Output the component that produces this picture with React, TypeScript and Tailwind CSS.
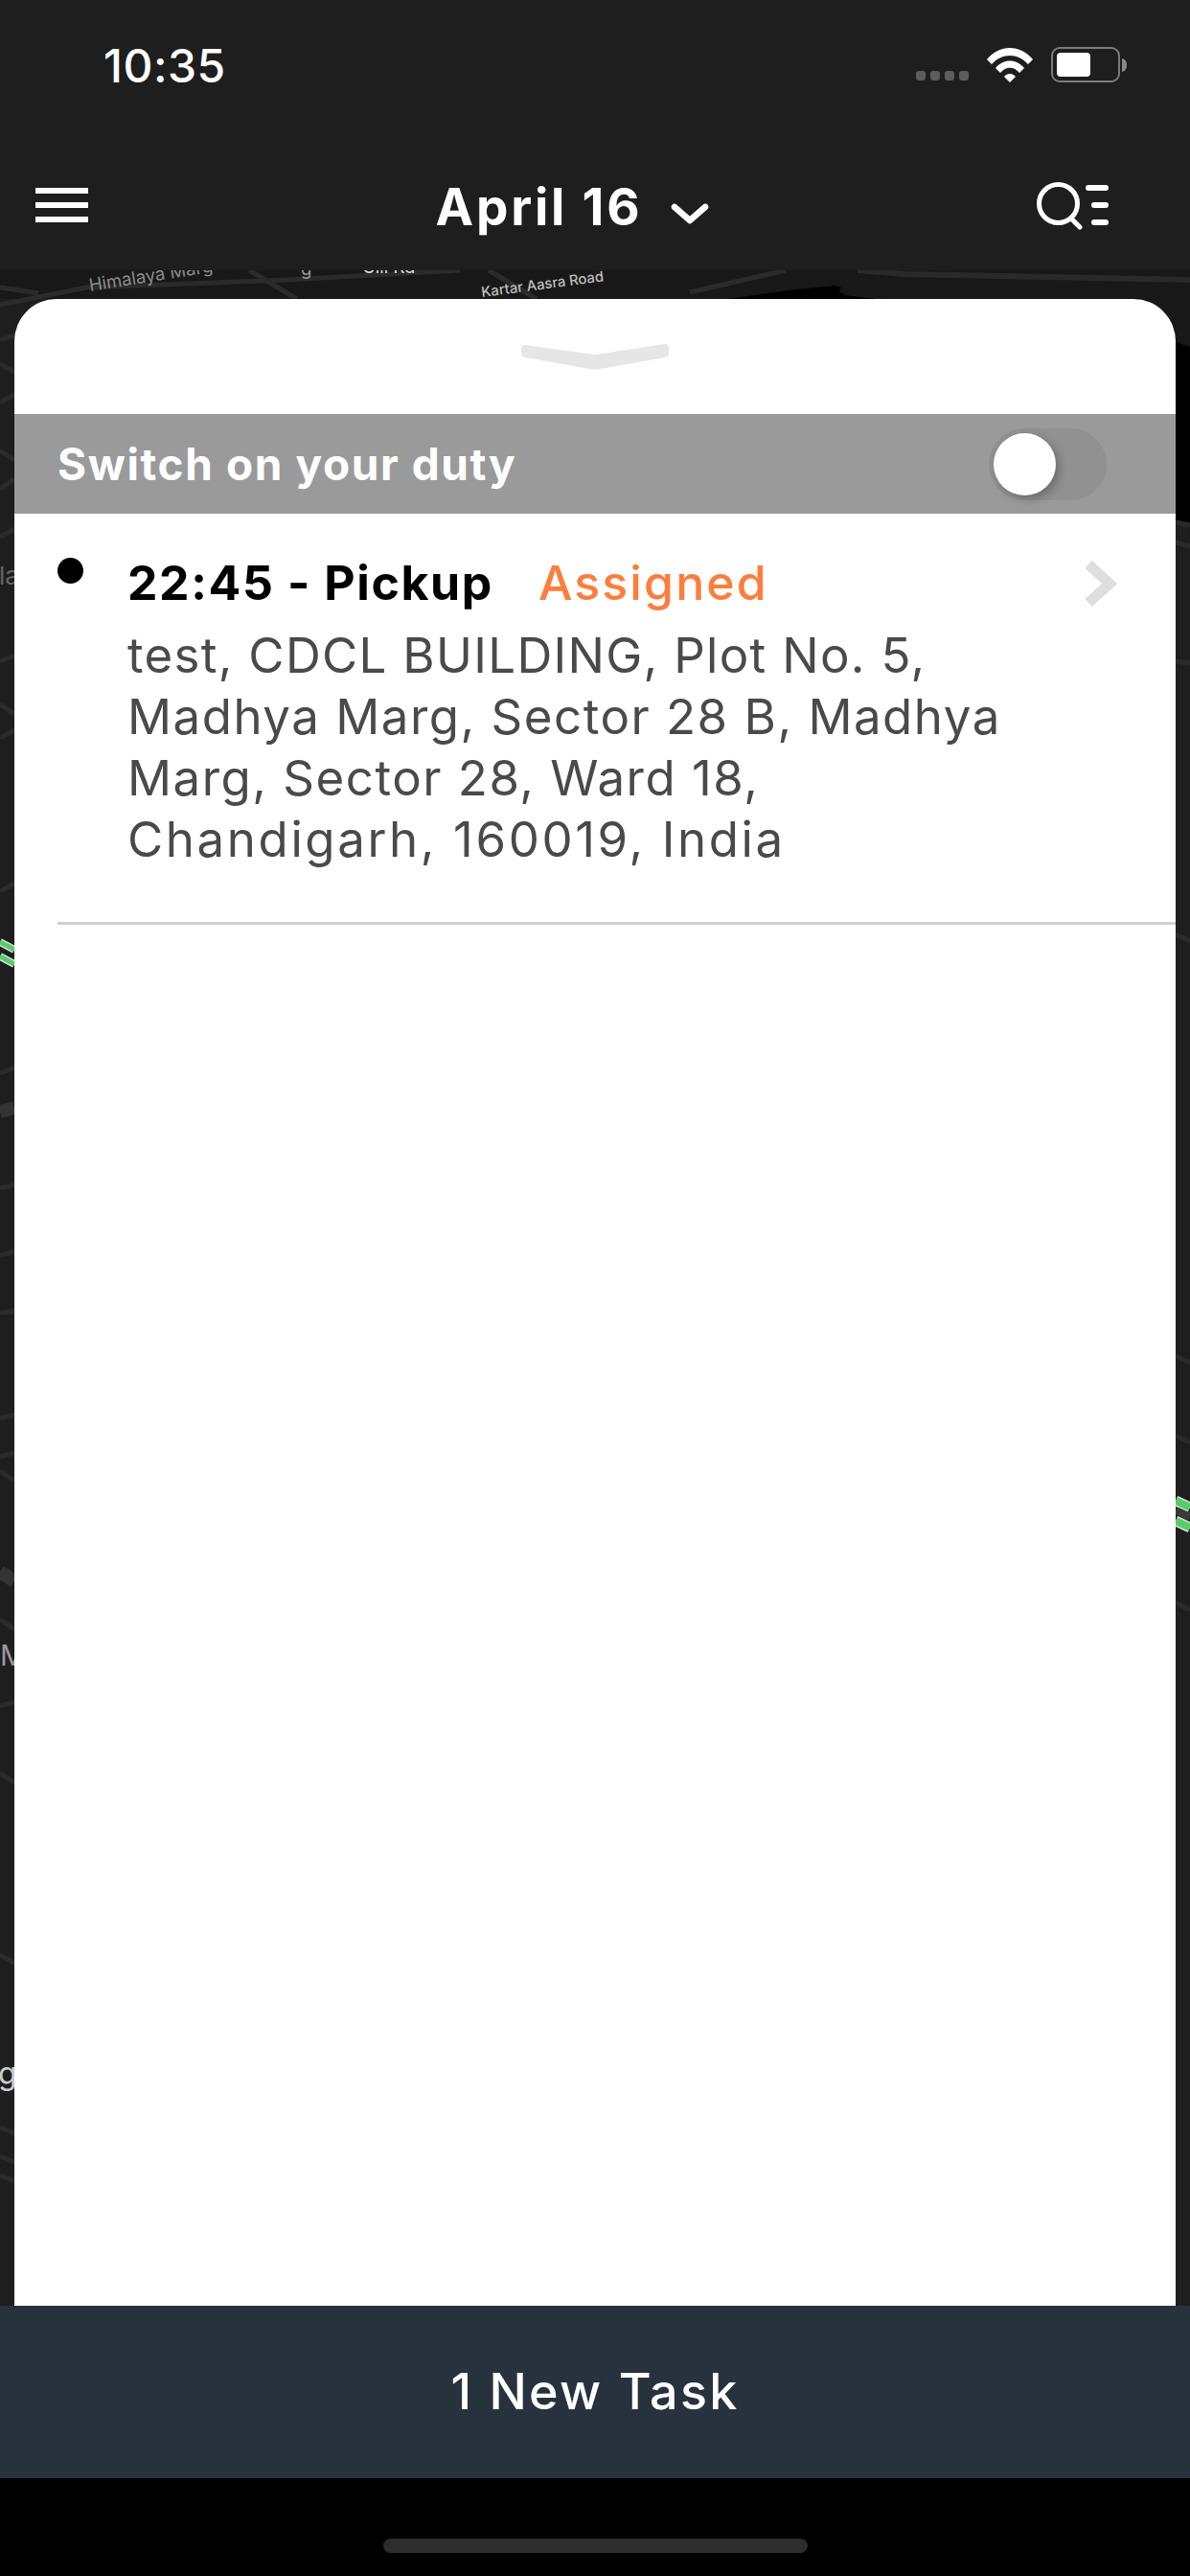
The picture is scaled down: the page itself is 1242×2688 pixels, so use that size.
const F = { fontFamily: '"Inter", "Liberation Sans", sans-serif' };

function MapBackdrop() {
  const road = "#2b2b2b";
  return (
    <svg className="absolute left-0 top-0" width="1242" height="2688" viewBox="0 0 1242 2688">
      <rect width="1242" height="2688" fill="#1e1e1e" />
      <path d="M0 282H1242V560L1227 362L1100 330L880 307L840 302L760 312H0Z" fill="#181818" />
      <path d="M760 312L822 303L872 298L878 300L876 304L882 308L915 312H1100L1242 362V548H1227V362H760Z" fill="#000" />
      <g fill="none" stroke={road} strokeWidth="5">
        <path d="M0 318L90 300L300 292L480 282" />
        <path d="M0 300L40 306M260 282L310 312M510 282L560 312M720 305L820 282" />
        <path d="M895 282L945 286L1242 292" strokeWidth="6" stroke="#2a2a2a" />
        <path d="M0 355L15 350M0 380L15 388M0 420L15 412M0 470L15 480M0 510L15 500M0 560L15 552" />
        <path d="M0 690L15 684M0 735L15 745M0 770L15 762M0 930L15 922" />
        <path d="M0 1120L15 1114M0 1240L15 1236M0 1310L15 1306M0 1370L15 1368M0 1480L15 1476M0 1520L15 1516M0 1535L15 1545" />
        <path d="M0 1690L15 1700M0 1780L15 1776M0 1850L15 1860M0 2040L15 2048M0 2220L15 2226M0 2250L15 2256M0 2270L15 2276" />
        <path d="M1227 545L1242 548M1227 566L1242 570M1227 690L1242 692M1227 975L1242 982" />
        <path d="M1227 1415L1242 1422M1227 1498L1242 1505M1227 1672L1242 1680" />
      </g>
      <path d="M0 1160L15 1156" stroke="#333" strokeWidth="14" />
      <path d="M0 1640L15 1650" stroke="#333" strokeWidth="14" />
      <path d="M0 983L15 991M0 998L15 1006" stroke="#ddd" strokeWidth="8" />
      <path d="M0 983L15 991M0 998L15 1006" stroke="#56cc6a" strokeWidth="5" />
      <path d="M1227 1566L1242 1573M1227 1587L1242 1594" stroke="#ddd" strokeWidth="11" />
      <path d="M1227 1566L1242 1573M1227 1587L1242 1594" stroke="#56cc6a" strokeWidth="8" />
      <path d="M1227 1576L1242 1583" stroke="#3a3a3a" strokeWidth="8" />
      <g style={F} fontSize="18.5" fill="#8c8c8c">
        <text x="94" y="304" transform="rotate(-9 94 304)">Himalaya Marg</text>
        <text x="503" y="310" transform="rotate(-7.5 503 310)" fill="#bdbdbd" fontSize="14.8" fontWeight="500">Kartar Aasra Road</text>
        <text x="-1" y="610" fontSize="26" fill="#666">la</text>
        <text x="0" y="1738" fontSize="30" fill="#999">M</text>
        <text x="-2" y="2175" fontSize="32" fill="#ccc">g</text>
        <text x="314" y="287" fill="#999">g</text>
        <text x="378" y="285" fill="#ddd">Gill Rd</text>
      </g>
    </svg>
  );
}

function Wifi() {
  return (
    <svg width="48" height="37" viewBox="0 0 48 37" fill="#fff">
      <path d="M0 13C13-3 35-3 48 13L43 18C32 6 16 6 5 18Z" />
      <path d="M9 22C17 12 31 12 39 22L34 27C28 20 20 20 14 27Z" />
      <path d="M18 31C21 27 27 27 30 31L24 37Z" />
    </svg>
  );
}

function Battery() {
  return (
    <div className="flex items-center">
      <div className="flex h-[37px] w-[72px] items-center rounded-[9px] border-[2.5px] border-[#7b7b7b] pl-[3.5px]">
        <div className="h-[25px] w-[35px] rounded-[4px] bg-white" />
      </div>
      <svg width="6" height="14" viewBox="0 0 6 14" className="ml-[2px]"><path d="M0 0C4 1 5 4 5 7S4 13 0 14Z" fill="#8a8a8a" /></svg>
    </div>
  );
}

function SearchList() {
  return (
    <svg width="76" height="52" viewBox="0 0 76 52" fill="none" stroke="#fff" strokeLinecap="round">
      <circle cx="22.5" cy="24.5" r="20" strokeWidth="5" />
      <path d="M37 41L45 49" strokeWidth="5" />
      <path d="M54 8H72M60 26H72M60 44H72" strokeWidth="6" />
    </svg>
  );
}

export default function App() {
  return (
    <div className="relative flex h-[2688px] w-[1242px] flex-col overflow-hidden" style={F}>
      <MapBackdrop />

      <header className="relative h-[282px] shrink-0 bg-[#1e1e1e] text-white">
        <div className="flex h-[135px] items-center justify-between pl-[108px] pr-[65px]">
          <span className="pt-[2px] text-[48px] font-medium tracking-[0.5px]">10:35</span>
          <div className="flex items-center">
            <div className="mt-[22px] flex gap-[5px]">
              <i className="h-[10px] w-[10px] rounded-[3px] bg-[#5c5c5c]" />
              <i className="h-[10px] w-[10px] rounded-[3px] bg-[#5c5c5c]" />
              <i className="h-[10px] w-[10px] rounded-[3px] bg-[#5c5c5c]" />
              <i className="h-[10px] w-[10px] rounded-[3px] bg-[#5c5c5c]" />
            </div>
            <div className="ml-[19px] mr-[19px]"><Wifi /></div>
            <Battery />
          </div>
        </div>
        <div className="flex h-[147px] items-center justify-between pl-[37px] pr-[84px] pt-[11px]">
          <div className="flex flex-col gap-[9px]">
            <i className="h-[6px] w-[55px] bg-white" />
            <i className="h-[6px] w-[55px] bg-white" />
            <i className="h-[6px] w-[55px] bg-white" />
          </div>
          <div className="ml-[21px] flex items-center gap-[30px]">
            <span className="mt-[5px] text-[53px] font-bold tracking-[2.8px]">April 16</span>
            <svg width="40" height="22" viewBox="0 0 40 22" fill="none" stroke="#fff" strokeWidth="6.5" strokeLinecap="round" strokeLinejoin="round" className="mt-[17px]"><path d="M4 4L20 18L36 4" /></svg>
          </div>
          <SearchList />
        </div>
      </header>

      <main className="relative mx-[15px] mt-[30px] flex min-h-0 flex-1 flex-col rounded-t-[44px] bg-white">
        <div className="flex h-[120px] shrink-0 justify-center pt-[47px]">
          <svg width="156" height="28" viewBox="0 0 156 28" fill="#e6e6e6"><path d="M5 1L78 11L151 0Q155 0 155 4V10Q155 13 151 14L78 27L5 14Q1 13 1 9V5Q1 1 5 1Z" /></svg>
        </div>

        <div className="flex h-[104px] shrink-0 items-center justify-between bg-[#9a9a9a] pl-[45px] pr-[72px]">
          <span className="text-[46px] font-bold tracking-[1.6px] text-white">Switch on your duty</span>
          <div className="flex h-[75px] w-[123px] items-center rounded-full bg-[#919191] pl-[5px]">
            <div className="h-[65px] w-[65px] rounded-full bg-white shadow-[4px_4px_10px_rgba(0,0,0,0.25)]" />
          </div>
        </div>

        <div className="relative ml-[45px] flex border-b-[3px] border-[#cfcfcf] pb-[54px] pt-[40px]">
          <div className="mr-[46px] mt-[6px] h-[27px] w-[27px] shrink-0 rounded-full bg-black" />
          <div className="min-w-0 flex-1">
            <div className="flex items-center text-[50px] leading-[64px]">
              <span className="font-bold tracking-[1.6px] text-black">22:45 - Pickup</span>
              <span className="ml-[47px] font-medium tracking-[2.1px] text-[#ff7d3b]">Assigned</span>
            </div>
            <p className="mt-[12px] text-[51px] font-normal leading-[64px] tracking-[1.5px] text-[#4a4a4a]">
              <span className="tracking-[1.3px]">test, CDCL BUILDING, Plot No. 5,</span><br />
              Madhya Marg, Sector 28 B, Madhya<br />
              Marg, Sector 28, Ward 18,<br />
              <span className="tracking-[2.6px]">Chandigarh, 160019, India</span>
            </p>
          </div>
          <svg width="34" height="48" viewBox="0 0 34 48" fill="none" stroke="#dedede" strokeWidth="11" className="absolute right-[61px] top-[49px]"><path d="M4 4L26 24L4 44" /></svg>
        </div>
      </main>

      <div className="relative flex h-[180px] shrink-0 items-center justify-center bg-[#27323e]">
        <span className="text-[52px] font-medium tracking-[2.3px] text-white">1 New Task</span>
      </div>

      <div className="relative flex h-[102px] shrink-0 justify-center bg-black pt-[63px]">
        <div className="h-[15px] w-[443px] rounded-full bg-[#2d2d2d]" />
      </div>
    </div>
  );
}
